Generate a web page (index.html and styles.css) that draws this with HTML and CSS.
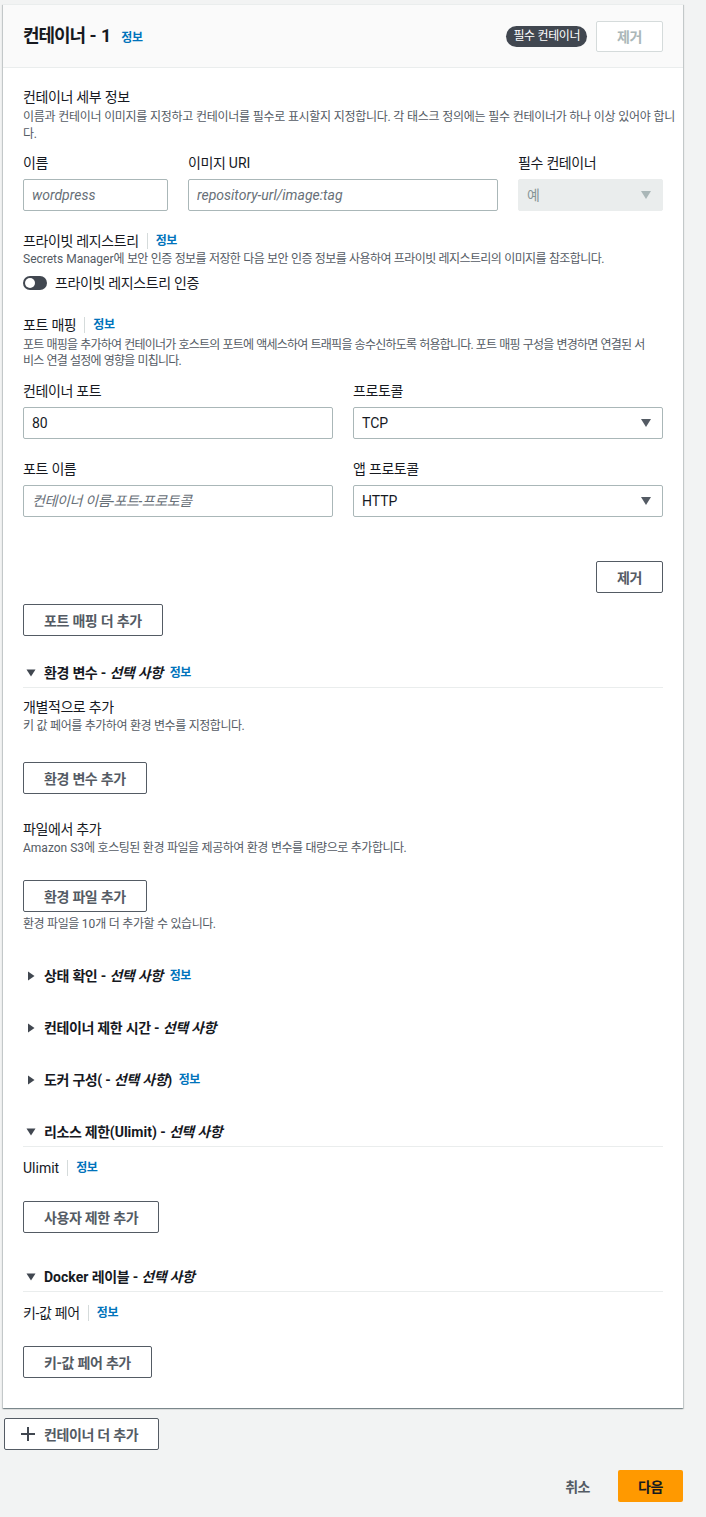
FILE: index.html
```html
<!DOCTYPE html>
<html lang="ko">
<head>
<meta charset="utf-8">
<title>컨테이너 - 1</title>
<link rel="stylesheet" href="styles.css">
</head>
<body>
<div class="page">
  <section class="card">
    <header class="card-header">
      <h2 class="card-title"><span>컨테이너 <span class="en">- 1</span></span><a class="info">정보</a></h2>
      <div class="header-actions">
        <span class="badge">필수 컨테이너</span>
        <button class="btn btn-disabled">제거</button>
      </div>
    </header>

    <div class="card-body">
      <div class="details">
        <div class="group-title">컨테이너 세부 정보</div>
        <p class="desc desc-details">이름과 컨테이너 이미지를 지정하고 컨테이너를 필수로 표시할지 지정합니다. 각 태스크 정의에는 필수 컨테이너가 하나 이상 있어야 합니<br>다.</p>
      </div>

      <div class="fields-main">
        <div class="field">
          <label class="field-label">이름</label>
          <input class="input en" placeholder="wordpress">
        </div>
        <div class="field">
          <label class="field-label">이미지 <span class="en">URI</span></label>
          <input class="input en" placeholder="repository-url/image:tag">
        </div>
        <div class="field">
          <label class="field-label">필수 컨테이너</label>
          <div class="select select-disabled">
            <span>예</span>
            <svg class="caret" width="10" height="8" viewBox="0 0 10 8"><path d="M0 0H10L5 8Z"/></svg>
          </div>
        </div>
      </div>

      <div class="registry">
        <div class="group-title-sm">프라이빗 레지스트리<a class="info info-sep">정보</a></div>
        <p class="desc desc-registry"><span class="en">Secrets Manager</span>에 보안 인증 정보를 저장한 다음 보안 인증 정보를 사용하여 프라이빗 레지스트리의 이미지를 참조합니다.</p>
        <div class="toggle-row">
          <span class="toggle"></span>
          <span>프라이빗 레지스트리 인증</span>
        </div>
      </div>

      <div class="ports">
        <div class="group-title-sm">포트 매핑<a class="info info-sep">정보</a></div>
        <p class="desc desc-ports">포트 매핑을 추가하여 컨테이너가 호스트의 포트에 액세스하여 트래픽을 송수신하도록 허용합니다. 포트 매핑 구성을 변경하면 연결된 서<br>비스 연결 설정에 영향을 미칩니다.</p>
      </div>

      <div class="fields-ports">
        <div class="field">
          <label class="field-label">컨테이너 포트</label>
          <input class="input en" value="80">
        </div>
        <div class="field">
          <label class="field-label">프로토콜</label>
          <div class="select">
            <span class="en">TCP</span>
            <svg class="caret" width="10" height="8" viewBox="0 0 10 8"><path d="M0 0H10L5 8Z"/></svg>
          </div>
        </div>
        <div class="field">
          <label class="field-label">포트 이름</label>
          <input class="input" placeholder="컨테이너 이름-포트-프로토콜">
        </div>
        <div class="field">
          <label class="field-label">앱 프로토콜</label>
          <div class="select">
            <span class="en">HTTP</span>
            <svg class="caret" width="10" height="8" viewBox="0 0 10 8"><path d="M0 0H10L5 8Z"/></svg>
          </div>
        </div>
      </div>

      <div class="remove-row"><button class="btn">제거</button></div>
      <button class="btn add-port">포트 매핑 더 추가</button>

      <div class="expander expander-env expanded">
        <div class="expander-head">
          <svg class="tri" width="16" height="16" viewBox="0 0 16 16"><path d="M3.5 4.5H12.5L8 11.5Z"/></svg>
          <span>환경 변수 - <em>선택 사항</em></span><a class="info info-head">정보</a>
        </div>
        <div class="expander-body">
          <div class="sub-title">개별적으로 추가</div>
          <p class="desc">키 값 페어를 추가하여 환경 변수를 지정합니다.</p>
          <button class="btn sub-btn">환경 변수 추가</button>
          <div class="sub-title file-title">파일에서 추가</div>
          <p class="desc"><span class="en">Amazon S3</span>에 호스팅된 환경 파일을 제공하여 환경 변수를 대량으로 추가합니다.</p>
          <button class="btn file-btn">환경 파일 추가</button>
          <p class="desc note">환경 파일을 <span class="en">10</span>개 더 추가할 수 있습니다.</p>
        </div>
      </div>

      <div class="expander expander-after-note">
        <div class="expander-head">
          <svg class="tri" width="16" height="16" viewBox="0 0 16 16"><path d="M5 3.5L11.5 8L5 12.5Z"/></svg>
          <span>상태 확인 - <em>선택 사항</em></span><a class="info info-head">정보</a>
        </div>
      </div>

      <div class="expander">
        <div class="expander-head">
          <svg class="tri" width="16" height="16" viewBox="0 0 16 16"><path d="M5 3.5L11.5 8L5 12.5Z"/></svg>
          <span>컨테이너 제한 시간 - <em>선택 사항</em></span>
        </div>
      </div>

      <div class="expander">
        <div class="expander-head">
          <svg class="tri" width="16" height="16" viewBox="0 0 16 16"><path d="M5 3.5L11.5 8L5 12.5Z"/></svg>
          <span>도커 구성( - <em>선택 사항</em>)</span><a class="info info-head">정보</a>
        </div>
      </div>

      <div class="expander expanded">
        <div class="expander-head">
          <svg class="tri" width="16" height="16" viewBox="0 0 16 16"><path d="M3.5 4.5H12.5L8 11.5Z"/></svg>
          <span>리소스 제한<span class="en">(Ulimit)</span> - <em>선택 사항</em></span>
        </div>
        <div class="expander-body">
          <div class="sub-title sub-title-info"><span class="en">Ulimit</span><a class="info info-sep">정보</a></div>
          <button class="btn sub-btn">사용자 제한 추가</button>
        </div>
      </div>

      <div class="expander expander-after-btn expanded">
        <div class="expander-head">
          <svg class="tri" width="16" height="16" viewBox="0 0 16 16"><path d="M3.5 4.5H12.5L8 11.5Z"/></svg>
          <span><span class="en">Docker</span> 레이블 - <em>선택 사항</em></span>
        </div>
        <div class="expander-body">
          <div class="sub-title sub-title-info">키-값 페어<a class="info info-sep">정보</a></div>
          <button class="btn sub-btn">키-값 페어 추가</button>
        </div>
      </div>
    </div>
  </section>

  <button class="btn add-container">
    <svg class="plus" width="14" height="14" viewBox="0 0 14 14"><path d="M7 0V14M0 7H14"/></svg>
    <span>컨테이너 더 추가</span>
  </button>

  <div class="footer">
    <button class="btn-link">취소</button>
    <button class="btn-primary">다음</button>
  </div>
</div>
</body>
</html>
```

FILE: styles.css
```css
body {
  margin: 0;
  background: #f2f3f3;
  font-family: Roboto, "Noto Sans CJK KR", sans-serif;
  font-size: 14px;
  line-height: 22px;
  color: #16191f;
  letter-spacing: -0.03em;
  word-spacing: 0.03em;
}

.en {
  letter-spacing: 0;
  word-spacing: 0;
}

.page {
  width: 680px;
  padding: 4px 0 13px 3px;
}

.card {
  background: #fff;
  border-top: 1px solid #eaeded;
  box-shadow: 0 1px 1px 0 rgba(0, 28, 36, 0.3), 1px 1px 1px 0 rgba(0, 28, 36, 0.15), -1px 1px 1px 0 rgba(0, 28, 36, 0.15);
}

.card-header {
  height: 62px;
  padding: 0 20px;
  display: flex;
  align-items: center;
  justify-content: space-between;
  background: #fafafa;
  border-bottom: 1px solid #eaeded;
}

.card-title {
  margin: 0;
  font-size: 18px;
  line-height: 22px;
  font-weight: 700;
  letter-spacing: -0.06em;
  word-spacing: 0.06em;
  display: flex;
  align-items: baseline;
  gap: 10px;
}

.info {
  font-size: 12px;
  font-weight: 700;
  color: #0073bb;
  line-height: 16px;
  letter-spacing: -0.03em;
}

.info-sep {
  margin-left: 8px;
  padding-left: 8px;
  border-left: 1px solid #d5dbdb;
}

.info-head {
  margin-left: 7px;
}

.header-actions {
  display: flex;
  align-items: center;
  gap: 9px;
}

.badge {
  background: #414750;
  color: #fff;
  font-size: 12px;
  line-height: 21px;
  padding: 0 7px;
  border-radius: 12px;
}

.btn {
  height: 32px;
  box-sizing: border-box;
  padding: 0 20px;
  border: 1px solid #545b64;
  border-radius: 2px;
  background: #fff;
  color: #545b64;
  font-family: inherit;
  font-size: 14px;
  font-weight: 700;
  letter-spacing: inherit;
  word-spacing: inherit;
  display: inline-flex;
  align-items: center;
  cursor: pointer;
}

.btn-disabled {
  height: 31px;
  border-color: #d5dbdb;
  color: #aab7b8;
}

.card-body {
  padding: 18px 20px 30px;
}

.group-title {
  line-height: 22px;
}

.desc {
  margin: 0;
  font-size: 12px;
  line-height: 16px;
  color: #545b64;
  letter-spacing: -0.04em;
  word-spacing: 0.04em;
}

.desc .en {
  letter-spacing: 0;
  word-spacing: 0;
}

.desc-details {
  margin-top: 1px;
  line-height: 17px;
  white-space: nowrap;
  letter-spacing: -0.025em;
  word-spacing: 0.025em;
}

.desc-registry {
  line-height: 17px;
  letter-spacing: -0.05em;
  word-spacing: 0.05em;
}

.desc-ports {
  margin-top: 2px;
  white-space: nowrap;
  letter-spacing: -0.065em;
  word-spacing: 0.065em;
}

.fields-main {
  margin-top: 9px;
  display: grid;
  grid-template-columns: 145px 1fr 145px;
  column-gap: 20px;
}

.field {
  display: flex;
  flex-direction: column;
  min-width: 0;
}

.field-label {
  line-height: 22px;
  margin-bottom: 5px;
}

.input {
  height: 32px;
  box-sizing: border-box;
  width: 100%;
  margin: 0;
  padding: 0 8px;
  border: 1px solid #aab7b8;
  border-radius: 2px;
  font-family: inherit;
  font-size: 14px;
  color: #16191f;
  background: #fff;
  outline: none;
}

.input:not(.en) {
  letter-spacing: -0.03em;
  word-spacing: 0.03em;
}

.input::placeholder {
  color: #687078;
  font-style: italic;
}

.select {
  height: 32px;
  box-sizing: border-box;
  padding: 0 11px 0 8px;
  border: 1px solid #aab7b8;
  border-radius: 2px;
  display: flex;
  align-items: center;
  justify-content: space-between;
  background: #fff;
}

.caret {
  fill: #545b64;
}

.select-disabled {
  background: #eaeded;
  border-color: #eaeded;
  color: #879596;
}

.select-disabled .caret {
  fill: #aab7b8;
}

.registry {
  margin-top: 20px;
}

.group-title-sm {
  line-height: 20px;
  display: flex;
  align-items: center;
}

.toggle-row {
  margin-top: 4px;
  display: flex;
  align-items: center;
  gap: 8px;
}

.toggle {
  position: relative;
  width: 24px;
  height: 14px;
  border-radius: 7px;
  background: #414750;
  flex: none;
}

.toggle::after {
  content: "";
  position: absolute;
  left: 2px;
  top: 2px;
  width: 10px;
  height: 10px;
  border-radius: 50%;
  background: #fff;
}

.ports {
  margin-top: 21px;
}

.fields-ports {
  margin-top: 11px;
  display: grid;
  grid-template-columns: 1fr 1fr;
  column-gap: 20px;
  row-gap: 19px;
}

.remove-row {
  margin-top: 44px;
  display: flex;
  justify-content: flex-end;
}

.add-port {
  margin-top: 11px;
}

.expander {
  margin-top: 30px;
}

.expander-env {
  margin-top: 26px;
}

.expander-after-note,
.expander-after-btn {
  margin-top: 33px;
}

.expander-head {
  display: flex;
  align-items: center;
  font-weight: 700;
  line-height: 22px;
}

.expanded .expander-head {
  padding-bottom: 3px;
  border-bottom: 1px solid #eaeded;
}

.expander-head em {
  font-style: italic;
}

.tri {
  fill: #414750;
  margin-right: 5px;
  flex: none;
}

.expander-body {
  display: flex;
  flex-direction: column;
  align-items: flex-start;
}

.sub-title {
  margin-top: 8px;
  line-height: 22px;
  display: flex;
  align-items: center;
}

.sub-title-info {
  margin-top: 10px;
}

.file-title {
  margin-top: 24px;
}

.sub-btn {
  margin-top: 22px;
}

.expander-env .sub-btn {
  margin-top: 28px;
}

.file-btn {
  margin-top: 24px;
}

.note {
  margin-top: 4px;
}

.add-container {
  margin: 10px 0 0 1px;
  padding-left: 16px;
  gap: 9px;
}

.plus {
  stroke: #414750;
  stroke-width: 2;
  fill: none;
}

.footer {
  margin-top: 20px;
  display: flex;
  justify-content: flex-end;
  align-items: center;
  gap: 8px;
}

.btn-link {
  height: 32px;
  padding: 0 20px;
  border: none;
  background: none;
  font-family: inherit;
  font-size: 14px;
  font-weight: 700;
  color: #545b64;
  letter-spacing: inherit;
  cursor: pointer;
}

.btn-primary {
  height: 32px;
  padding: 0 20px;
  border: none;
  border-radius: 2px;
  background: #ff9900;
  font-family: inherit;
  font-size: 14px;
  font-weight: 700;
  color: #16191f;
  letter-spacing: inherit;
  cursor: pointer;
}
```
